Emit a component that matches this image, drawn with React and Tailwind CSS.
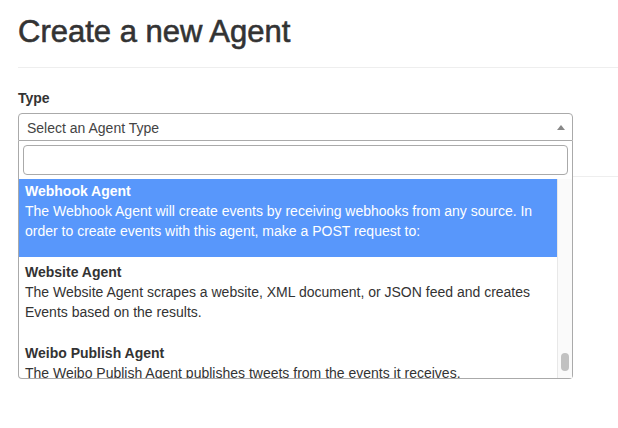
import React from 'react';

const agents = [
  {
    name: 'Webhook Agent',
    description:
      'The Webhook Agent will create events by receiving webhooks from any source. In order to create events with this agent, make a POST request to:',
    active: true,
  },
  {
    name: 'Website Agent',
    description:
      'The Website Agent scrapes a website, XML document, or JSON feed and creates Events based on the results.',
  },
  {
    name: 'Weibo Publish Agent',
    description: 'The Weibo Publish Agent publishes tweets from the events it receives.',
  },
];

function ResultItem({ agent }) {
  return (
    <li
      className={
        agent.active
          ? 'px-[6px] pt-[2px] pb-[16px] bg-[#5897fb] text-white'
          : 'px-[6px] pt-[5px] pb-[16px] text-[#333]'
      }
    >
      <div className="font-bold leading-[20px]">{agent.name}</div>
      <div className="leading-[20px]">{agent.description}</div>
    </li>
  );
}

export default function App() {
  return (
    <div className="min-h-screen bg-white pl-[18px] font-['Liberation_Sans',Arial,sans-serif] text-[14px] text-[#333]">
      <h1 className="mt-[15px] text-[31px] leading-[34px] font-normal text-[#333] [-webkit-text-stroke:0.6px_#333]">
        Create a new Agent
      </h1>
      <hr className="mt-[18px] border-t border-[#eee]" />

      <label className="mt-[20px] block font-bold leading-[20px] text-[#333]">Type</label>
      <div className="relative mt-[5px] w-[555px]">
        <div className="flex h-[28px] items-center justify-between rounded-t-[4px] border border-[#aaa] pl-[8px] pr-[7px] text-[#444]">
          <span className="translate-y-[1px]">Select an Agent Type</span>
          <span className="h-0 w-0 border-x-[4px] border-b-[5px] border-x-transparent border-b-[#888]" />
        </div>

        <div className="absolute left-0 top-full z-10 w-full rounded-b-[4px] border-x border-b border-[#aaa] bg-white">
          <div className="px-[4px] pt-[4px]">
            <input
              type="text"
              className="block h-[30px] w-full rounded-[4px] border border-[#aaa] px-[6px] outline-none"
            />
          </div>
          <div className="mt-[4px] flex h-[199px] overflow-hidden">
            <ul className="flex-1">
              {agents.map((agent) => (
                <ResultItem key={agent.name} agent={agent} />
              ))}
            </ul>
            <div className="relative w-[15px] border-l border-[#e8e8e8] bg-[#fafafa]">
              <div className="absolute left-[3px] top-[174px] h-[18px] w-[8px] rounded-full bg-[#c1c1c1]" />
            </div>
          </div>
        </div>
      </div>

      <hr className="mt-[35px] border-t border-[#eee]" />
    </div>
  );
}
